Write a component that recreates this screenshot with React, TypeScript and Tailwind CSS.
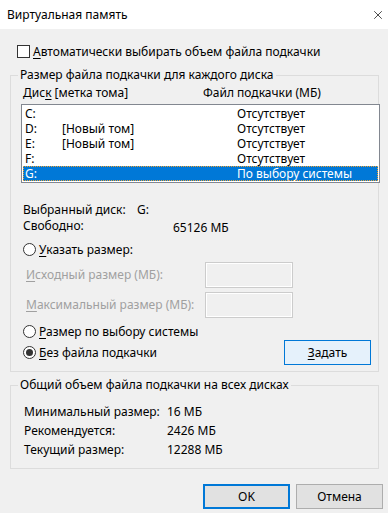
import { X } from "lucide-react";

const Key = ({ c }: { c: string }) => <span className="underline underline-offset-2">{c}</span>;

const rows = [
  { disk: "C:", label: "", file: "Отсутствует" },
  { disk: "D:", label: "[Новый том]", file: "Отсутствует" },
  { disk: "E:", label: "[Новый том]", file: "Отсутствует" },
  { disk: "F:", label: "", file: "Отсутствует" },
  { disk: "G:", label: "", file: "По выбору системы", selected: true },
];

function Radio({ checked }: { checked?: boolean }) {
  return (
    <span className="flex h-[13px] w-[13px] items-center justify-center rounded-full border border-[#333] bg-white">
      {checked && <span className="h-[7px] w-[7px] rounded-full bg-[#333]" />}
    </span>
  );
}

function Group({ title, children, className }: { title: string; children: React.ReactNode; className?: string }) {
  return (
    <div className={`w-[369px] border border-[#dcdcdc] ${className ?? ""}`}>
      <div className="-mt-[9px] ml-[7px] w-fit bg-[#f0f0f0] px-[2px] leading-[16px]">{title}</div>
      {children}
    </div>
  );
}

export default function App() {
  return (
    <div
      className="h-[513px] w-[388px] bg-[#f0f0f0] text-[12px] leading-[16px] text-black"
      style={{ fontFamily: '"Noto Sans", sans-serif' }}
    >
      {/* Title bar */}
      <div className="flex h-[29px] items-center justify-between bg-white pl-[7px] pr-[3px]">
        <span>Виртуальная память</span>
        <X className="h-[14px] w-[14px]" strokeWidth={1.2} />
      </div>

      <div className="px-[10px]">
        {/* Auto checkbox */}
        <div className="mt-[16px] flex h-[13px] items-center pl-[7px]">
          <span className="h-[13px] w-[13px] border border-[#333] bg-white" />
          <span className="ml-[3px]">
            <Key c="А" />
            втоматически выбирать объем файла подкачки
          </span>
        </div>

        {/* Per-disk group */}
        <Group title="Размер файла подкачки для каждого диска" className="mt-[17px] h-[297px]">
          <div className="pl-[12px]">
            <div className="mt-[2px] flex h-[16px] items-center">
              <span className="w-[180px]">
                Дис<Key c="к" /> [метка тома]
              </span>
              <span>Файл подкачки (МБ)</span>
            </div>
          </div>
          <div className="ml-[10px] mt-[3px] h-[79px] w-[359px] border border-[#828790] bg-white p-[1px]">
            {rows.map((r) => (
              <div
                key={r.disk}
                className={`flex h-[15px] items-center pl-[2px] leading-[15px] ${
                  r.selected ? "bg-[#0078d7] text-white outline-1 -outline-offset-1 outline-dotted outline-[#f0a030]" : ""
                }`}
              >
                <span className="w-[37px]">{r.disk}</span>
                <span className="w-[175px]">{r.label}</span>
                <span>{r.file}</span>
              </div>
            ))}
          </div>

          <div className="pl-[12px]">
            <div className="mt-[19px] flex h-[16px] items-center">
              <span className="w-[114px]">Выбранный диск:</span>
              <span>G:</span>
            </div>
            <div className="flex h-[16px] items-center">
              <span className="w-[150px]">Свободно:</span>
              <span className="mt-[3px]">65126 МБ</span>
            </div>

            <div className="mt-[9px] flex h-[13px] items-center">
              <Radio />
              <span className="ml-[3px]">
                <Key c="У" />
                казать размер:
              </span>
            </div>

            <div className="mt-[6px] flex h-[26px] items-center">
              <span className="ml-[3px] w-[179px] text-[#a0a0a0]">
                <Key c="И" />
                сходный размер (МБ):
              </span>
              <span className="h-[26px] w-[88px] border border-[#cccccc] shadow-[inset_0_0_0_1px_#ffffff]" />
            </div>
            <div className="mt-[4px] flex h-[26px] items-center">
              <span className="ml-[3px] w-[179px] text-[#a0a0a0]">
                <Key c="М" />
                аксимальный размер (МБ):
              </span>
              <span className="h-[26px] w-[88px] border border-[#cccccc] shadow-[inset_0_0_0_1px_#ffffff]" />
            </div>

            <div className="mt-[7px] flex h-[13px] items-center">
              <Radio />
              <span className="ml-[3px]">
                <Key c="Р" />
                азмер по выбору системы
              </span>
            </div>

            <div className="mt-[2px] flex h-[25px] items-center justify-between">
              <div className="flex items-center">
                <Radio checked />
                <span className="ml-[3px]">
                  <Key c="Б" />
                  ез файла подкачки
                </span>
              </div>
              <button className="mr-[7px] h-[25px] w-[87px] border border-[#0078d7] bg-[#e5f1fb]">
                <Key c="З" />
                адать
              </button>
            </div>
          </div>
        </Group>

        {/* Totals group */}
        <Group title="Общий объем файла подкачки на всех дисках" className="mt-[13px] h-[84px]">
          <div className="mt-[11px] flex flex-col gap-[3px] pl-[13px]">
            {[
              ["Минимальный размер:", "16 МБ"],
              ["Рекомендуется:", "2426 МБ"],
              ["Текущий размер:", "12288 МБ"],
            ].map(([k, v]) => (
              <div key={k} className="flex h-[16px] items-center">
                <span className="w-[143px] shrink-0">{k}</span>
                <span>{v}</span>
              </div>
            ))}
          </div>
        </Group>

        {/* Buttons */}
        <div className="mt-[15px] flex justify-end gap-[6px]">
          <button className="h-[25px] w-[87px] border-2 border-[#0078d7] bg-[#e1e1e1]">OK</button>
          <button className="-mr-[5px] h-[25px] w-[87px] border border-[#adadad] bg-[#e1e1e1]">Отмена</button>
        </div>
      </div>
    </div>
  );
}
